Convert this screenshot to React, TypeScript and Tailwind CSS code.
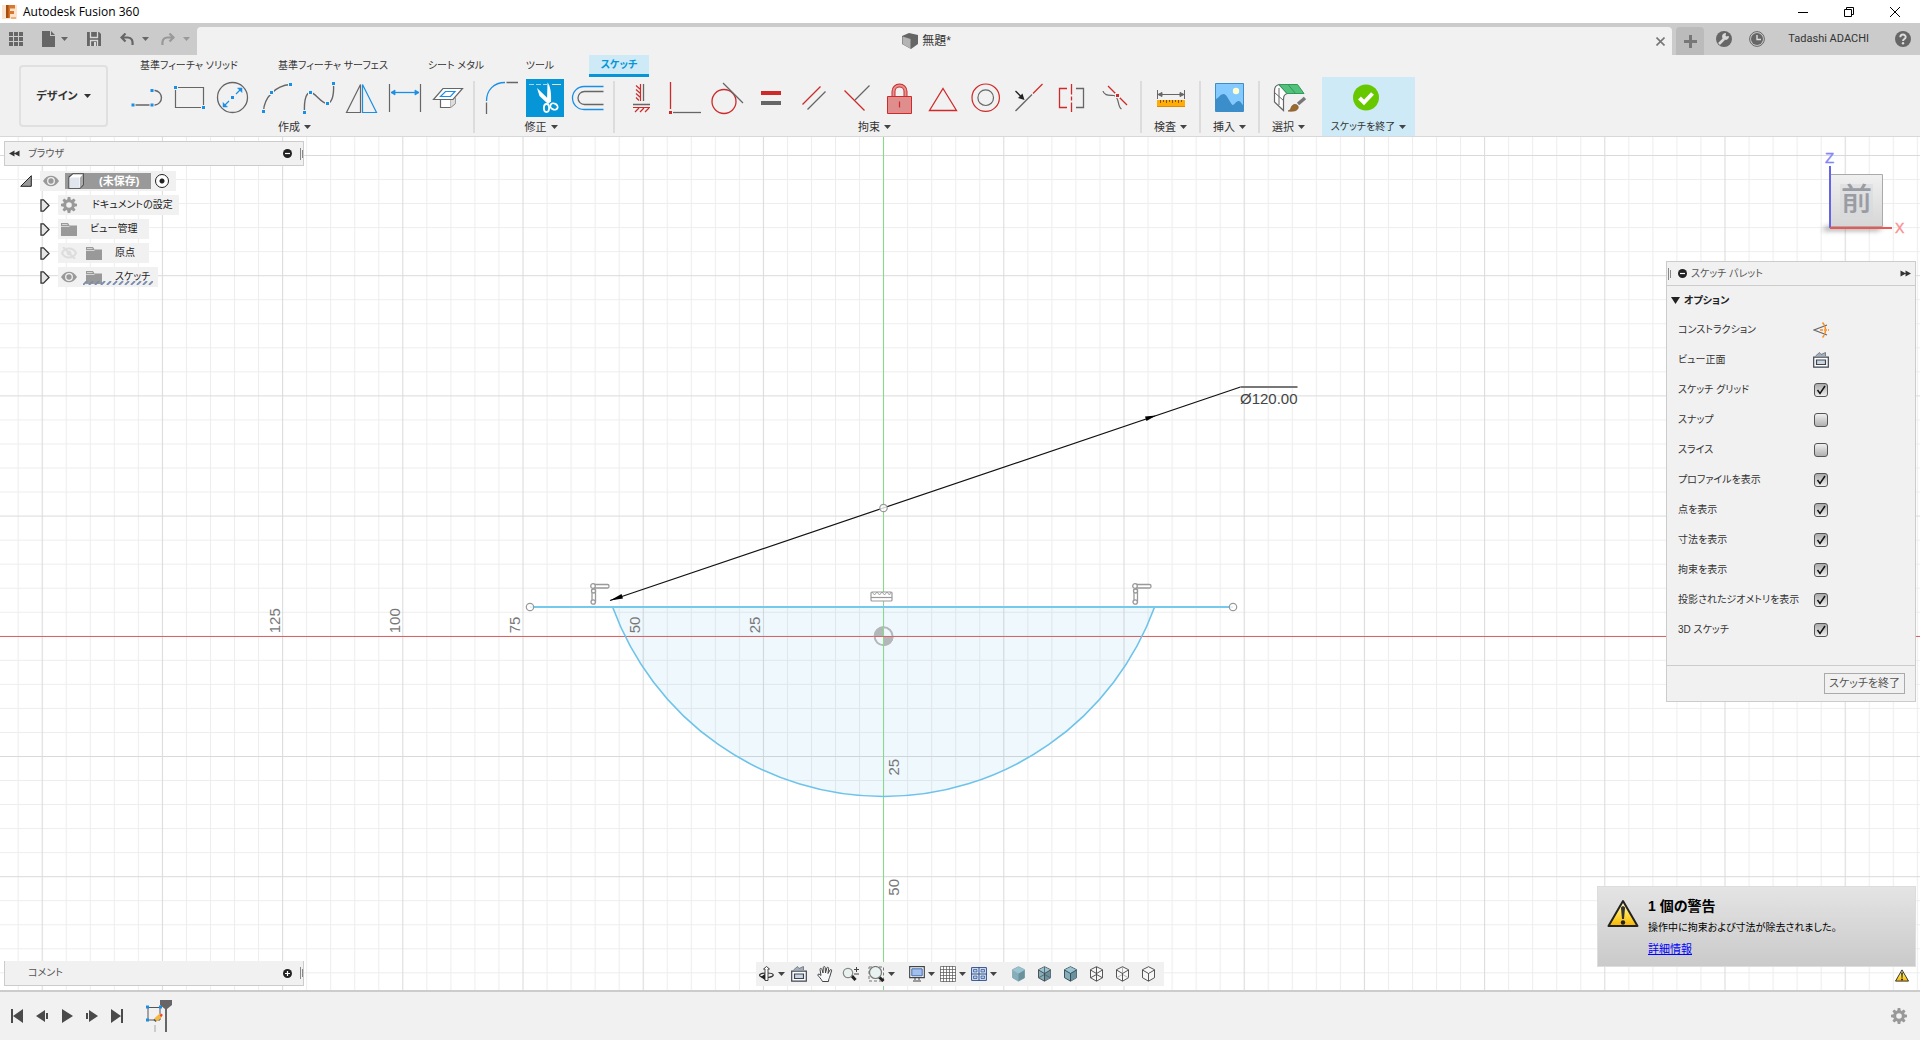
import React, { useState } from 'react';

const GRAY = '#666666';
const BLUE = '#1a8fe6';
const RED = '#cf2a2a';

type Pt = [number, number];

function Icon({ size = 38, children }: { size?: number; children: React.ReactNode }) {
  return (
    <svg width={size} height={size} viewBox={`0 0 ${size} ${size}`} fill="none" stroke={GRAY} className="block shrink-0" aria-hidden="true">
      {children}
    </svg>
  );
}

function Nodes({ at, color = BLUE }: { at: Pt[]; color?: string }) {
  return (
    <g stroke="#f1f1f1" strokeWidth="1" fill={color}>
      {at.map(([x, y]) => (
        <rect key={`${x}-${y}`} x={x - 2} y={y - 2} width="4" height="4" />
      ))}
    </g>
  );
}

function Caret({ className = 'text-[#444]' }: { className?: string }) {
  return (
    <svg width="7" height="4" viewBox="0 0 7 4" className={`block shrink-0 ${className}`} aria-hidden="true">
      <path d="M0 0h7L3.5 4z" fill="currentColor" />
    </svg>
  );
}

function Gear({ size = 16, color = '#999' }: { size?: number; color?: string }) {
  return (
    <svg width={size} height={size} viewBox="-8 -8 16 16" className="block shrink-0" aria-hidden="true">
      <circle r="4.3" fill="none" stroke={color} strokeWidth="3" />
      {[0, 45, 90, 135, 180, 225, 270, 315].map((a) => (
        <path key={a} d="M-1.8 -5h3.6l-.5 -3h-2.6z" fill={color} transform={`rotate(${a})`} />
      ))}
    </svg>
  );
}

const createTools: [string, React.ReactNode][] = [
  ['線分', <><path d="M4 26h22a7.3 7.3 0 0 0 0 -14.5h-3" strokeWidth="1.4" /><Nodes at={[[4, 26], [23, 26], [23, 11.5]]} /></>],
  ['長方形', <><path d="M3.5 8.5h28v20h-28z" strokeWidth="1.2" /><Nodes at={[[3.5, 8.5], [31.5, 28.5]]} /></>],
  ['円', <><circle cx="17.5" cy="18.5" r="15" strokeWidth="1.3" /><g stroke={BLUE} strokeWidth="1.2"><path d="M9.500 26.500L14 22M21 15l4.500 -4.500" /><path d="M8 23.500V28h4.500zM22.500 9H27v4.500z" fill={BLUE} strokeWidth=".5" /></g><Nodes at={[[17.5, 18.5]]} /></>],
  ['円弧', <><path d="M5.500 32.500C6 19 17 6.500 32.500 5.500" strokeWidth="1.4" /><Nodes at={[[5.5, 32.5], [13.5, 13.5], [32.5, 5.5]]} /></>],
  ['スプライン', <><path d="M3.500 33.500C3 22 5 14 9.500 13.500S20 25 26.500 24.500C32 23 33 14 32.500 4.500" strokeWidth="1.4" /><Nodes at={[[3.5, 33.5], [9.5, 13.5], [26.5, 24.5], [32.5, 4.5]]} /></>],
  ['ミラー', <><path d="M16.500 5.500v28h-14z" strokeWidth="1.2" /><path d="M18.500 5.500v28h14z" stroke={BLUE} strokeWidth="1.2" /></>],
  ['寸法', <><path d="M2.500 5v28M33.500 5v28" strokeWidth="1.2" /><path d="M4 13.500h28" stroke={BLUE} strokeWidth="1.3" /><path d="M4 13.500l4 -2.500v5zM32 13.500l-4 -2.500v5z" fill={BLUE} stroke={BLUE} strokeWidth=".8" /></>],
  ['プロジェクト', <><path d="M10.500 20.500v8h10l4.500 -4v-6" fill="#fff" strokeWidth="1.2" /><path d="M20.500 20.500v8l4.500 -4v-8z" fill="#ddd" stroke="none" /><path d="M20.500 21v7.500" strokeWidth="1" stroke="#bbb" /><path d="M13 9.500h19.500l-9.500 11H3.500z" fill="#fff" strokeWidth="1.2" /><path d="M15.500 12.500H25l-4.500 5H10.500z" stroke={BLUE} strokeWidth="1.2" /></>],
];

const modifyTools: [string, React.ReactNode][] = [
  ['フィレット', <><path d="M3.500 22C3.500 11 11 3.500 22 3.500" stroke={BLUE} strokeWidth="1.3" /><path d="M23.500 3.500H35M3.500 23.500V35" strokeWidth="1.3" /></>],
  ['トリム', <><path d="M3 5.500h18" stroke="#a5d8f2" strokeDasharray="5 2" /><path d="M26 5.500h9" stroke="#e9dcc8" /><path d="M21.500 3.500c2.500 3 4 9 3.500 19.500l-4 -1z" fill="#fff" stroke="none" /><path d="M11 9l2.500 8 8.500 8 3 -2.500z" fill="#fff" stroke="none" /><ellipse cx="20.500" cy="29" rx="2.600" ry="4" stroke="#fff" strokeWidth="1.800" /><ellipse cx="28" cy="27.500" rx="3.800" ry="3" stroke="#fff" strokeWidth="1.800" transform="rotate(28 28 27.500)" /></>],
  ['オフセット', <><path d="M34.500 7.500H15a11.500 11.500 0 0 0 0 23h19.500" stroke={BLUE} strokeWidth="1.3" /><path d="M34.500 12.500H15.500a6.500 6.500 0 0 0 0 13h19" strokeWidth="1.3" /></>],
];

const constraintTools: [string, React.ReactNode][] = [
  ['水平/垂直', <><path d="M17.500 5v17M13 6.500l4.500 4M13 10.500l4.500 4M13 14.500l4.500 4M13 18.500l3 3" stroke={RED} strokeWidth="1.2" /><path d="M20.500 5v17M10 25.500h17" strokeWidth="1.3" /><path d="M10 28.500h17M16 29l-4 4M21 29l-4 4M26 29l-4 4" stroke={RED} strokeWidth="1.2" /></>],
  ['直交', <><path d="M4.500 3v27" stroke={RED} strokeWidth="1.3" /><path d="M7 33.500h28" strokeWidth="1.3" /><Nodes at={[[4.5, 33.5]]} color={RED} /></>],
  ['正接', <><circle cx="15" cy="22.500" r="12" stroke={RED} strokeWidth="1.3" /><path d="M14 4l20 20" strokeWidth="1.3" /></>],
  ['等しい', <><path d="M9 12h20v4H9z" fill={RED} stroke="none" /><path d="M9 22h20v4H9z" fill={GRAY} stroke="none" /></>],
  ['平行', <><path d="M7.500 25.500l18 -18" stroke={RED} strokeWidth="1.3" /><path d="M12.500 30.500l18 -18" strokeWidth="1.3" /></>],
  ['垂直', <><path d="M6.500 11.500l20 20" stroke={RED} strokeWidth="1.3" /><path d="M17 21L31.500 6.500" strokeWidth="1.3" /></>],
  ['固定', <><path d="M12.500 17.500v-5a6 6 0 0 1 12 0v5" stroke={RED} strokeWidth="4" /><path d="M12.500 17.500v-5a6 6 0 0 1 12 0v5" stroke="#e39292" strokeWidth="2" /><path d="M6.500 17.500h24v17h-24z" fill="#df8d8d" stroke={RED} /><path d="M18.500 22.500v6" stroke={RED} strokeWidth="1.200" /></>],
  ['中点三角', <path d="M19 9.500l13.500 22h-27z" stroke={RED} strokeWidth="1.3" />],
  ['同心円', <><circle cx="18.700" cy="18.700" r="13.700" stroke={RED} strokeWidth="1.200" /><circle cx="18.700" cy="18.700" r="7.800" strokeWidth="1.200" /></>],
  ['共線', <><path d="M5.500 32L22 15.500" strokeWidth="1.3" /><path d="M23 14.500l9.500 -9.500" stroke={RED} strokeWidth="1.3" /><path d="M5.500 12l6 6" stroke="#222" strokeWidth="1.300" /><path d="M14.500 21l-6.500 -2 4.500 -4.500z" fill="#222" stroke="none" /></>],
  ['対称', <><path d="M14 9.500H6.500v19H14" stroke={RED} strokeWidth="1.3" /><path d="M18.500 5v10.500M18.500 17.500v4M18.500 23.500V33" stroke={RED} strokeWidth="1.3" /><path d="M23 9.500h7.500v19H23" strokeWidth="1.3" /></>],
  ['曲率', <><path d="M7 12c1 5 7 4 11 4.500c6 2 3 11.500 7.500 13.500" strokeWidth="1.2" /><path d="M12 7l19 19" stroke={RED} strokeWidth="1.3" /><Nodes at={[[21.5, 16.5]]} color={RED} /></>],
];

function Tool({ label, active, children }: { label: string; active?: boolean; children: React.ReactNode }) {
  return (
    <button type="button" aria-label={label} className={active ? 'bg-[#0696d7]' : ''}>
      <Icon>{children}</Icon>
    </button>
  );
}

function GroupLabel({ text, className = '' }: { text: string; className?: string }) {
  return (
    <button type="button" className={`mt-0.5 flex h-4 items-center justify-center gap-1 whitespace-nowrap ${className}`}>
      {text}
      <Caret />
    </button>
  );
}

function ToolGroup({ label, tools, active }: { label: string; tools: [string, React.ReactNode][]; active?: string }) {
  return (
    <section className="flex flex-col pt-0.5" aria-label={label}>
      <div className="flex gap-[5px]">
        {tools.map(([name, art]) => (
          <Tool key={name} label={name} active={name === active}>{art}</Tool>
        ))}
      </div>
      <GroupLabel text={label} className="pr-2" />
    </section>
  );
}

function SingleGroup({ label, children }: { label: string; children: React.ReactNode }) {
  return (
    <section className="flex w-[57px] flex-col items-center pt-0.5" aria-label={label}>
      <Tool label={label}>{children}</Tool>
      <GroupLabel text={label} />
    </section>
  );
}

const Divider = ({ className = '' }: { className?: string }) => <div className={`mt-1 h-[52px] w-0.5 shrink-0 bg-[#dcdcdc] ${className}`} />;

function TitleBar() {
  return (
    <div className="flex h-[23px] items-center bg-white text-black">
      <svg width="16" height="16" viewBox="0 0 16 16" className="ml-0.5" aria-hidden="true">
        <path d="M0 1h15v14H0z" fill="#fbe3cc" />
        <path d="M4 1h9v3.500H8V7h4v3H8v4H4z" fill="#d9782d" />
        <path d="M4 1h2.500v13H4z" fill="#a54f12" />
        <path d="M9 13h5v2H9z" fill="#f0b27a" />
      </svg>
      <h1 className="ml-[5px] font-['Open_Sans',sans-serif] text-[12px]">Autodesk Fusion 360</h1>
      <div className="ml-auto flex h-5 items-center pr-0.5">
        <button type="button" aria-label="最小化" className="grid w-[46px] place-items-center">
          <svg width="10" height="10"><path d="M0 5.500h10" stroke="#000" /></svg>
        </button>
        <button type="button" aria-label="元に戻す" className="grid w-[46px] place-items-center">
          <svg width="10" height="10" fill="none" stroke="#000"><path d="M.5 2.500h7v7h-7zM2.500 2.500v-2h7v7h-2" /></svg>
        </button>
        <button type="button" aria-label="閉じる" className="grid w-[46px] place-items-center">
          <svg width="10" height="10" stroke="#000"><path d="M0 0l10 10M10 0L0 10" /></svg>
        </button>
      </div>
    </div>
  );
}

function DocumentBar() {
  return (
    <div className="flex h-8 bg-[#cbcbcb] pt-1">
      <div className="flex w-[197px] shrink-0 items-center pb-1 pl-[9px] text-[#666]">
        <button type="button" aria-label="データパネル">
          <svg width="14" height="14" viewBox="0 0 14 14" fill="#666"><path d="M0 0h4v4H0zM5 0h4v4H5zM10 0h4v4h-4zM0 5h4v4H0zM5 5h4v4H5zM10 5h4v4h-4zM0 10h4v4H0zM5 10h4v4H5zM10 10h4v4h-4z" /></svg>
        </button>
        <button type="button" aria-label="ファイル" className="ml-[19px] flex items-center gap-1.5">
          <svg width="13" height="16" viewBox="0 0 13 16" fill="#666"><path d="M0 0h8v5h5v11H0zM9 0l4 4H9z" /></svg>
          <Caret className="text-[#666]" />
        </button>
        <button type="button" aria-label="保存" className="ml-[19px]">
          <svg width="14" height="14" viewBox="0 0 14 14"><path d="M0 0h12l2 2v12H0z" fill="#666" /><path d="M3.500 0v5.500h7V0M3.500 14V8.500h7V14" fill="none" stroke="#d8d8d8" strokeWidth="1.300" /><path d="M7 10h2v4H7z" fill="#d8d8d8" /></svg>
        </button>
        <button type="button" aria-label="元に戻す" className="ml-[19px] flex items-center gap-2">
          <svg width="14" height="13" viewBox="0 0 14 13" fill="none" stroke="#666" strokeWidth="2.200"><path d="M5.500 0.500L1.500 4.500l4 4M2 4.500h6c3.500 0 5 3 4.500 7.500" /></svg>
          <Caret className="text-[#666]" />
        </button>
        <button type="button" aria-label="やり直し" className="ml-3 flex items-center gap-2">
          <svg width="14" height="13" viewBox="0 0 14 13" fill="none" stroke="#999" strokeWidth="2.200"><path d="M8.500 0.500l4 4l-4 4M12 4.500H6C2.500 4.500 1 7.500 1.500 12" /></svg>
          <Caret className="text-[#999]" />
        </button>
      </div>
      <div className="flex min-w-0 flex-1 items-center rounded-t bg-[#f1f1f1]">
        <div className="flex flex-1 items-center justify-center gap-1 text-[12px] text-[#333]">
          <svg width="16" height="16" viewBox="0 0 16 16" aria-hidden="true"><path d="M0 3l7 -3 9 2v9l-7 5 -9 -5z" fill="#666" /><path d="M0.500 3.500l8 2.500v9.500l-8 -4.500z" fill="#b4b4b4" /></svg>
          無題*
        </div>
        <button type="button" aria-label="タブを閉じる" className="w-4">
          <svg width="9" height="9" stroke="#777" strokeWidth="1.600"><path d="M.5 .5l8 8M8.500 .5l-8 8" /></svg>
        </button>
      </div>
      <button type="button" aria-label="新しいデザイン" className="ml-1 grid w-7 shrink-0 place-items-center rounded-t bg-[#bbb]">
        <svg width="13" height="13"><path d="M6.500 0v13M0 6.500h13" stroke="#777" strokeWidth="3" /></svg>
      </button>
      <div className="flex shrink-0 items-center pb-1 pl-3 pr-[9px]">
        <button type="button" aria-label="拡張機能">
          <svg width="16" height="16" viewBox="0 0 16 16"><circle cx="8" cy="8" r="8" fill="#666" /><path d="M3 13l5 -5" stroke="#d8d8d8" strokeWidth="2.600" /><path d="M12.500 5.500a3 3 0 1 1 -3 -3l-.5 2.500 1 1z" fill="#d8d8d8" stroke="#d8d8d8" strokeWidth="1" /></svg>
        </button>
        <button type="button" aria-label="ジョブの状態" className="ml-[17px]">
          <svg width="16" height="16" viewBox="0 0 16 16" fill="none"><circle cx="8" cy="8" r="7.400" stroke="#666" /><circle cx="8" cy="8" r="6" fill="#666" /><path d="M8 4v4.500h4" stroke="#ddd" strokeWidth="1.400" /></svg>
        </button>
        <button type="button" className="ml-[23px] whitespace-nowrap font-['Roboto',sans-serif] text-[11px] text-[#333]">Tadashi ADACHI</button>
        <button type="button" aria-label="ヘルプ" className="ml-[26px]">
          <svg width="16" height="16" viewBox="0 0 16 16" fill="none"><circle cx="8" cy="8" r="8" fill="#666" /><path d="M5.300 6.300C5.300 2.600 10.700 2.800 10.700 6C10.700 8 8 8 8 10" stroke="#ddd" strokeWidth="1.900" /><circle cx="8" cy="12.300" r="1.200" fill="#ddd" /></svg>
        </button>
      </div>
    </div>
  );
}

function Ribbon() {
  return (
    <div className="flex h-[82px] border-b border-[#d8d8d8] bg-[#f1f1f1] text-[11px] text-[#333]">
      <button type="button" className="ml-[19px] mt-2.5 flex h-[62px] w-[89px] shrink-0 items-center justify-center gap-1.5 rounded border-2 border-[#e0e0e0] font-bold">
        デザイン
        <Caret className="text-[#333]" />
      </button>
      <div className="min-w-0 flex-1">
        <div role="tablist" className="ml-[11px] flex h-[22px] whitespace-nowrap text-[10px]">
          <button type="button" role="tab" className="w-[140px]">基準フィーチャ ソリッド</button>
          <button type="button" role="tab" className="w-[148px]">基準フィーチャ サーフェス</button>
          <button type="button" role="tab" className="w-[98px]">シート メタル</button>
          <button type="button" role="tab" className="w-[70px]">ツール</button>
          <button type="button" role="tab" aria-selected="true" className="ml-3.5 w-[60px] border-b-[3px] border-[#0696d7] bg-[#cdeaf6] font-bold text-[#0696d7]">スケッチ</button>
        </div>
        <div className="ml-[21px] flex">
          <ToolGroup label="作成" tools={createTools} />
          <Divider className="ml-[5px] mr-2" />
          <ToolGroup label="修正" tools={modifyTools} active="トリム" />
          <Divider className="ml-1.5 mr-2" />
          <ToolGroup label="拘束" tools={constraintTools} />
          <Divider className="ml-1.5" />
          <SingleGroup label="検査">
            <path d="M5.500 11v9M32.500 11v9M7 15.500h24" />
            <path d="M6 15.500l4 -2v4zM32 15.500l-4 -2v4z" fill={GRAY} />
            <path d="M5 21h28v7H5z" fill="#ffab0a" stroke="none" />
            <path d="M5 27.500h28" stroke="#e08a00" />
            <path d="M8.500 21v3M11.500 21v2M14.500 21v3M17.500 21v2M20.500 21v3M23.500 21v2M26.500 21v3M29.500 21v2" stroke="#7a5a10" />
          </SingleGroup>
          <Divider />
          <SingleGroup label="挿入">
            <path d="M4.500 4.500h28v28h-28z" fill="#84caff" stroke="#3c8ecb" />
            <path d="M5 20c3 -1 4 -5 7.500 -5s6 8 9 11c2 0 3.500 -4 6 -4s3 3 4.500 4v6H5z" fill="#3c8ecb" stroke="none" />
            <circle cx="25" cy="12" r="3.200" fill="#ffffcf" stroke="none" />
          </SingleGroup>
          <Divider />
          <SingleGroup label="選択">
            <path d="M9 5.500c-4 1 -4.500 4 -4.500 6v11.500l9 8.500V20c0 -3 1 -5 4 -5.500z" fill="#fff" strokeWidth="1.200" />
            <path d="M4.500 13.500l9 8M9 9v17" strokeWidth="1" />
            <path d="M9 5.500h18.500l6.500 9H17z" fill="#53c07c" stroke="#2f9a5a" />
            <path d="M18 5.500l7.500 9" stroke="#2f9a5a" />
            <path d="M35 19l-7 6" stroke="#777" strokeWidth="3.500" />
            <path d="M18 32c4 -1 2 -5 6 -6.500c3 -.5 5 1.500 4 4c-1.500 3 -6 3 -10 2.500z" fill="#9b6a2f" stroke="#6f4a1e" strokeWidth=".6" />
          </SingleGroup>
          <section className="ml-[5px] flex h-[59px] w-[93px] flex-col items-center bg-[#cdeaf6] pt-0.5" aria-label="スケッチを終了">
            <div className="flex pr-1.5">
              <Tool label="スケッチを終了 (チェック)">
                <circle cx="19" cy="18.500" r="13" fill="#67c800" stroke="none" />
                <path d="M12.500 19l4.500 4.500 8.500 -9" stroke="#fff" strokeWidth="4" />
              </Tool>
            </div>
            <GroupLabel text="スケッチを終了" className="text-[10px]" />
          </section>
        </div>
      </div>
    </div>
  );
}

const GRID = 120.2;
const OX = 883.6;
const OY = 499.3;

function LGlyph({ x, y }: { x: number; y: number }) {
  return (
    <g transform={`translate(${x} ${y})`} fill="#fff" stroke="#999" strokeWidth="1.300">
      <rect x="2" y="1.500" width="17" height="3.500" rx="1.500" />
      <path d="M2 7h3.500v12H2z" />
      <circle cx="3" cy="3" r="2.300" />
      <circle cx="3.500" cy="8" r="2" />
      <circle cx="3.200" cy="19" r="2.200" />
    </g>
  );
}

function Sketch() {
  return (
    <svg width="100%" height="100%" className="absolute inset-0 font-['Liberation_Sans',sans-serif]" role="img" aria-label="スケッチ平面">
      <defs>
        <pattern id="minor" x={OX - 0.5} y={OY - 0.5} width={GRID / 5} height={GRID / 5} patternUnits="userSpaceOnUse">
          <path d={`M.5 0V${GRID}M0 .5H${GRID}`} stroke="#000" strokeOpacity=".07" fill="none" />
        </pattern>
        <pattern id="major" x={OX - 0.5} y={OY - 0.5} width={GRID} height={GRID} patternUnits="userSpaceOnUse">
          <path d={`M.5 0V${GRID}M0 .5H${GRID}`} stroke="#000" strokeOpacity=".08" fill="none" />
        </pattern>
      </defs>
      <path d="M612.600 470A288.500 288.500 0 0 0 1154.600 470z" fill="#eff8fd" />
      <rect width="100%" height="100%" fill="url(#minor)" />
      <rect width="100%" height="100%" fill="url(#major)" />
      <path d="M883.500 0V2000" stroke="#86dc86" />
      <path d="M0 499.500H8000" stroke="#d96464" />
      <g transform={`translate(${OX} ${OY})`}>
        <path d="M-10 0a10 10 0 0 1 10 -10v10zM10 0a10 10 0 0 1 -10 10V0z" fill="#b3b7ba" />
        <circle r="9" fill="none" stroke="#b3b7ba" strokeWidth="2" />
      </g>
      <path d="M883.500 489v20" stroke="#86dc86" />
      <path d="M874 499.500h20" stroke="#d96464" />
      <path d="M612.600 470A288.500 288.500 0 0 0 1154.600 470" fill="none" stroke="#6ec3ea" strokeWidth="1.600" />
      <path d="M530 470H1233" stroke="#75c8ee" strokeWidth="2" />
      <path d="M610 463.500L1240.500 250" stroke="#111" strokeWidth="1.200" />
      <path d="M1240.500 250h57" stroke="#777" strokeWidth="2" />
      <path d="M610 463.500l11.500 -6.500 1.500 4.500zM1156 278.500l-11 1 1.500 4.500z" fill="#000" />
      <g fill="#fff" fillOpacity=".8" stroke="#999" strokeWidth="1.200">
        <circle cx="530" cy="470" r="3.700" />
        <circle cx="1233" cy="470" r="3.700" />
        <circle cx="883.500" cy="371" r="3.700" />
      </g>
      <LGlyph x={590} y={446} />
      <LGlyph x={1132} y={446} />
      <g fill="#fff" stroke="#999" strokeWidth="1.200">
        <rect x="871" y="455" width="21" height="9" rx="1" />
        <path d="M871 460.500h21" />
        <path d="M872 455l2.500 3 2.500 -3 2.500 3 2.500 -3 2.500 3 2.500 -3 2.500 3 1.500 -3" fill="none" strokeWidth=".9" />
      </g>
      <text x="1240" y="267" fontSize="15" fill="#444">Ø120.00</text>
      <g fontSize="15" fill="#777">
        {[125, 100, 75, 50, 25].map((n) => (
          <text key={n} transform={`translate(${OX - n * (GRID / 25) - 3} ${OY - 3}) rotate(-90)`}>{n}</text>
        ))}
        {[25, 50].map((n) => (
          <text key={n} transform={`translate(${OX + 15} ${OY + n * (GRID / 25) + 19}) rotate(-90)`}>{n}</text>
        ))}
      </g>
    </svg>
  );
}

const Eye = () => (
  <svg width="16" height="12" viewBox="0 0 16 12" className="block shrink-0" aria-hidden="true">
    <path d="M0 6C4 -1 12 -1 16 6C12 13 4 13 0 6z" fill="#999" />
    <circle cx="8" cy="6" r="3.300" fill="#999" stroke="#f1f1f1" strokeWidth="1.300" />
  </svg>
);

const EyeOff = () => (
  <svg width="16" height="12" viewBox="0 0 16 12" className="block shrink-0" fill="none" stroke="#ddd" aria-hidden="true">
    <path d="M1 6C4 0 12 0 15 6C12 12 4 12 1 6z" strokeWidth="2" />
    <path d="M2 0l12 12" strokeWidth="2" />
    <circle cx="8" cy="6" r="2" fill="#ddd" />
  </svg>
);

const Folder = () => (
  <svg width="16" height="13" viewBox="0 0 16 13" className="block shrink-0" aria-hidden="true">
    <path d="M0 0h7l1.500 2.500H16V13H0z" fill="#999" />
    <path d="M1 1.500h5.500M0 3.500h8.500" stroke="#d5d5d5" />
  </svg>
);

const Expander = () => (
  <svg width="10" height="13" viewBox="0 0 10 13" className="block shrink-0" aria-hidden="true">
    <path d="M1 .8h2.500L9 6.500L3.500 12.200H1z" fill="#e6e6e6" stroke="#333" strokeWidth="1.300" />
  </svg>
);

const Grip = () => (
  <svg width="3" height="12" className="block shrink-0" aria-hidden="true"><path d="M.5 0v12M2.500 2v8" stroke="#888" /></svg>
);

function RoundSign({ plus }: { plus?: boolean }) {
  return (
    <svg width="9" height="9" viewBox="0 0 9 9" className="block shrink-0" aria-hidden="true">
      <circle cx="4.500" cy="4.500" r="4.500" fill="#222" />
      <path d={plus ? 'M2 4.500h5M4.500 2v5' : 'M2 4.500h5'} stroke="#fff" strokeWidth="1.200" />
    </svg>
  );
}

function TreeRow({ children, className = '' }: { children: React.ReactNode; className?: string }) {
  return (
    <li className="flex h-5 items-center">
      <button type="button" aria-label="展開" className="ml-9"><Expander /></button>
      <div className={`ml-2 flex h-5 items-center bg-[#f1f1f1] pl-[3px] ${className}`}>{children}</div>
    </li>
  );
}

function Browser() {
  return (
    <div className="relative flex w-[300px] flex-col text-[10px]">
      <div className="flex h-[25px] items-center border border-[#ccc] bg-[#f1f1f1] pl-1 text-[#555]">
        <button type="button" aria-label="折りたたむ">
          <svg width="11" height="7"><path d="M5.500 .5v6L0 3.500zM10.500 .5v6L5 3.500z" fill="#333" /></svg>
        </button>
        <h2 className="ml-2">ブラウザ</h2>
        <button type="button" aria-label="最小化" className="ml-auto mr-2"><RoundSign /></button>
        <Grip />
      </div>
      <ul className="mt-[5px] flex flex-col gap-1 whitespace-nowrap text-[#222]">
        <li className="flex h-5 items-center">
          <svg width="12" height="12" viewBox="0 0 12 12" className="ml-4 mr-2" aria-hidden="true"><path d="M11.300 .7v10.600H.7z" fill="#999" stroke="#222" /></svg>
          <div className="flex h-5 w-[136px] items-center bg-[#f1f1f1] pl-[3px]">
            <Eye />
            <div className="ml-1.5 flex h-4 w-[86px] items-center bg-[#999] pl-[3px] text-[11px] font-bold text-white">
              <svg width="16" height="16" viewBox="0 0 16 16" className="mr-[15px] shrink-0" aria-hidden="true">
                <path d="M1 4l4 -3.300h10.300v11L12 15.300H1z" fill="#fff" stroke="#444" strokeWidth="1.100" />
                <path d="M1.500 4.500h10V15h-10z" fill="#e1e5ee" />
                <path d="M12 4.500l3 -3v10l-3 3.500z" fill="#aaa" />
              </svg>
              (未保存)
            </div>
            <input type="radio" defaultChecked aria-label="アクティブ コンポーネント" className="ml-1 size-3.5 appearance-none rounded-full border-[1.5px] border-[#222] bg-[radial-gradient(circle,#222_0_2px,#fff_3px)]" />
          </div>
        </li>
        <TreeRow className="min-w-[118px] pr-1.5"><Gear /><span className="ml-[15px]">ドキュメントの設定</span></TreeRow>
        <TreeRow className="min-w-[90px] pr-3"><Folder /><span className="ml-[13px]">ビュー管理</span></TreeRow>
        <TreeRow className="min-w-[91px] pr-3"><EyeOff /><span className="ml-[9px]"><Folder /></span><span className="ml-[13px]">原点</span></TreeRow>
        <TreeRow className="relative min-w-[99px] pr-2">
          <Eye /><span className="ml-[9px]"><Folder /></span><span className="ml-[13px]">スケッチ</span>
          <svg width="70" height="4" className="absolute bottom-0.5 left-[25px]" aria-hidden="true">
            <path d="M0 4l4 -4M6 4l4 -4M12 4l4 -4M18 4l4 -4M24 4l4 -4M30 4l4 -4M36 4l4 -4M42 4l4 -4M48 4l4 -4M54 4l4 -4M60 4l4 -4M66 4l4 -4" stroke="#7a8cae" strokeWidth="1.800" />
          </svg>
        </TreeRow>
      </ul>
      <div className="mt-auto mb-1 flex h-[25px] items-center border border-t-0 border-[#ccc] bg-[#f1f1f1] pl-[23px] text-[#555]">
        <h2>コメント</h2>
        <button type="button" aria-label="コメントを追加" className="ml-auto mr-2"><RoundSign plus /></button>
        <Grip />
      </div>
    </div>
  );
}

function ViewCube() {
  return (
    <svg width="110" height="100" viewBox="0 0 110 100" className="block shrink-0 font-['Liberation_Sans','Noto_Sans_CJK_JP',sans-serif]" role="img" aria-label="ビューキューブ">
      <defs>
        <linearGradient id="face" x1="0" y1="0" x2="0" y2="1"><stop offset="0" stopColor="#f0f0f0" /><stop offset="1" stopColor="#d6d6d6" /></linearGradient>
        <filter id="soft" x="-20%" width="140%" y="-200%" height="500%"><feGaussianBlur stdDeviation="2.500" /></filter>
      </defs>
      <path d="M16 81h58l-6 5H12z" fill="#777" opacity=".6" filter="url(#soft)" />
      <path d="M20.500 29.500h52v52h-52z" fill="url(#face)" stroke="#aaa" />
      <path d="M30 39h33v33H30z" fill="#d5d7dc" opacity=".5" />
      <text x="46.500" y="65" textAnchor="middle" fontSize="31" fontWeight="500" fill="#9a9ca3">前</text>
      <path d="M20 21v62" stroke="#6464e6" strokeWidth="2" />
      <path d="M20 83h62" stroke="#ee5555" strokeWidth="2" />
      <text x="15" y="18" fontSize="15" fill="#8585fa" stroke="#8585fa" strokeWidth=".4">Z</text>
      <text x="85" y="88" fontSize="14" fill="#fa8f8f" stroke="#fa8f8f" strokeWidth=".4">X</text>
    </svg>
  );
}

const options: [string, boolean][] = [
  ['スケッチ グリッド', true],
  ['スナップ', false],
  ['スライス', false],
  ['プロファイルを表示', true],
  ['点を表示', true],
  ['寸法を表示', true],
  ['拘束を表示', true],
  ['投影されたジオメトリを表示', true],
  ['3D スケッチ', true],
];

function Option({ label, initial }: { label: string; initial: boolean }) {
  const [on, setOn] = useState(initial);
  return (
    <label className="flex h-[30px] items-center">
      <span className="w-[136px] whitespace-nowrap">{label}</span>
      <span className="grid size-3.5 place-items-center">
        <input
          type="checkbox"
          checked={on}
          onChange={() => setOn(!on)}
          className="col-start-1 row-start-1 size-3.5 appearance-none rounded-[3px] border-[1.5px] border-[#555] bg-linear-to-b from-[#f0f0f0] to-[#b0b0b0] checked:from-[#aaa] checked:to-[#eee]"
        />
        {on && (
          <svg width="10" height="10" className="pointer-events-none col-start-1 row-start-1" aria-hidden="true">
            <path d="M1.500 5l2.500 3.500L9 1" fill="none" stroke="#111" strokeWidth="1.500" />
          </svg>
        )}
      </span>
    </label>
  );
}

const LookAt = () => (
  <svg width="16" height="16" viewBox="0 0 16 16" className="block" fill="none" aria-hidden="true">
    <path d="M2.500 4l4 -3.500 1.500 2 4.500 -2V4" fill="#9fb0c4" stroke="#777" strokeWidth=".9" />
    <path d="M.7 5.200h14.600v10H.7z" fill="#fff" stroke="#3e4450" strokeWidth="1.200" />
    <path d="M3.500 8h9v4.500h-9z" fill="#ccd6e2" stroke="#3e4450" strokeWidth="1.200" />
  </svg>
);

function Palette() {
  return (
    <section aria-label="スケッチ パレット" className="mr-1 w-[250px] border border-[#ccc] bg-[#f1f1f1] text-[10px] text-[#333]">
      <header className="flex h-6 items-center border-b border-[#ccc] pl-px text-[#555]">
        <Grip />
        <button type="button" aria-label="最小化" className="ml-[7px]"><RoundSign /></button>
        <h2 className="ml-1">スケッチ パレット</h2>
        <button type="button" aria-label="展開" className="ml-auto mr-1">
          <svg width="11" height="7"><path d="M.5 .5v6L6 3.500zM5.500 .5v6L11 3.500z" fill="#333" /></svg>
        </button>
      </header>
      <h3 className="flex h-[29px] items-center gap-1 pl-1 font-bold text-[#222]">
        <svg width="9" height="7" aria-hidden="true"><path d="M0 0h9L4.500 7z" fill="#222" /></svg>
        オプション
      </h3>
      <div className="pl-[11px]">
        <div className="flex h-[30px] items-center">
          <span className="w-[135px]">コンストラクション</span>
          <button type="button" aria-label="コンストラクション">
            <svg width="16" height="16" viewBox="0 0 16 16" fill="none" aria-hidden="true">
              <path d="M14 3L1 8l13 5" stroke="#666" strokeWidth="1.200" />
              <path d="M7 8h9" stroke="#ff8c1a" strokeWidth="1.500" strokeDasharray="3 1" />
              <path d="M9.500 .5c4 4.500 4 10.500 0 15" stroke="#ff8c1a" strokeWidth="1.500" strokeDasharray="3 1.500" />
            </svg>
          </button>
        </div>
        <div className="flex h-[30px] items-center">
          <span className="w-[135px]">ビュー正面</span>
          <button type="button" aria-label="ビュー正面"><LookAt /></button>
        </div>
        {options.map(([label, on]) => (
          <Option key={label} label={label} initial={on} />
        ))}
      </div>
      <footer className="mt-5 flex h-9 items-center justify-end border-t border-[#ccc] pr-2.5">
        <button type="button" className="h-[21px] whitespace-nowrap border border-[#aaa] px-1 text-[11px] leading-[19px] text-[#555]">スケッチを終了</button>
      </footer>
    </section>
  );
}

function Warning({ size }: { size: number }) {
  return (
    <svg width={size} height={size - 3} viewBox="0 0 32 29" className="block shrink-0" aria-hidden="true">
      <defs><linearGradient id={`warn${size}`} x1="0" y1="0" x2="0" y2="1"><stop offset="0" stopColor="#fffbe0" /><stop offset=".5" stopColor="#ffe14d" /><stop offset="1" stopColor="#f7b500" /></linearGradient></defs>
      <path d="M16 2L30.500 27H1.500z" fill={`url(#warn${size})`} stroke="#222" strokeWidth="2" strokeLinejoin="round" />
      <path d="M14 9c0 -2.500 4 -2.500 4 0l-1 11h-2z" fill="#333" />
      <circle cx="16" cy="23.500" r="2.200" fill="#222" />
    </svg>
  );
}

function Notice() {
  return (
    <aside className="mr-1 flex w-[319px] border border-[#ddd] bg-linear-to-b from-[#e4e4e4] to-[#cacaca] text-black">
      <div className="px-[9px] pt-3"><Warning size={32} /></div>
      <div className="h-[79px] whitespace-nowrap pt-2 text-[10px]">
        <h2 className="text-[14px] font-bold leading-[22px]">1 個の警告</h2>
        <p className="leading-[22px]">操作中に拘束および寸法が除去されました。</p>
        <a href="#details" className="text-[11px] leading-[20px] text-[#00f] underline">詳細情報</a>
      </div>
    </aside>
  );
}

const HEX = 'M6.500 .7l6 3v8l-6 3.500 -6 -3.500v-8z';

function Cube({ fill, hidden, faces, edge = '#444' }: { fill?: boolean; hidden?: string; faces?: boolean; edge?: string }) {
  return (
    <svg width="13" height="16" viewBox="0 0 13 16" className="block" fill="none" strokeWidth=".9" aria-hidden="true">
      <path d={HEX} fill={fill ? '#86adba' : '#f7f7f7'} stroke={edge} />
      {fill && <path d="M6.500 7.500l6 -3.500v8l-6 3z" fill="#6b909e" />}
      {fill && <path d="M6.500 7.500l-6 -3.500 6 -3 6 3z" fill="#9cc4d0" />}
      {hidden && <path d="M6.500 1v7.500l6 3.300M6.500 8.500l-6 3.300" stroke={hidden} />}
      {faces && <path d="M.5 4l6 3.500 6 -3.500M6.500 7.500V15" stroke={edge} />}
    </svg>
  );
}

function NavButton({ label, menu, className = '', children }: { label: string; menu?: boolean; className?: string; children: React.ReactNode }) {
  return (
    <button type="button" aria-label={label} className={`flex items-center gap-[3px] ${className}`}>
      {children}
      {menu && <Caret />}
    </button>
  );
}

function NavBar() {
  return (
    <div className="flex h-6 items-center bg-[#f1f1f1] pl-0.5 pr-[9px]">
      <NavButton label="オービット" menu>
        <svg width="17" height="16" viewBox="0 0 17 16" fill="none" stroke="#333" strokeWidth="1.200">
          <path d="M5 11c-5 -.5 -5 -4 3.500 -4s9 3.500 1.500 4.500" />
          <path d="M7 14.500V3H5.500L8.500 .5 11.500 3H10v11.500z" fill="#fff" strokeWidth=".9" />
          <path d="M7 8v6L2.500 11z" fill="#222" stroke="none" />
        </svg>
      </NavButton>
      <NavButton label="ビュー正面" className="ml-1.5"><LookAt /></NavButton>
      <NavButton label="画面移動" className="ml-2.5">
        <svg width="16" height="16" viewBox="0 0 16 16" fill="#f7f8fa" stroke="#444" strokeWidth="1"><path d="M5.500 15.500C4 12.500 2 11 .7 9c.3 -1.500 2 -1 3.300 .5L3 3.500c0 -1.500 1.500 -1.500 2 0l1 3.500 .3 -5.500c.2 -1.300 1.700 -1.300 1.900 0L8.500 7l1.300 -5c.5 -1.300 2 -.8 1.800 .5L11 7.500l2 -3.500c.8 -1 2 -.3 1.500 1L13 10c-.5 2 -1.500 3 -1.500 5.500z" /></svg>
      </NavButton>
      <NavButton label="ズーム" className="ml-[9px]">
        <svg width="17" height="16" viewBox="0 0 17 16" fill="none" stroke="#444"><path d="M9 9l4.500 5" stroke="#222" strokeWidth="3" /><circle cx="6" cy="7" r="4.700" fill="#e8f2f0" strokeWidth="1.200" stroke="#888" /><path d="M12 3.500h5M14.500 1v5M12 8h5" /></svg>
      </NavButton>
      <NavButton label="フィット" menu className="ml-[9px]">
        <svg width="17" height="16" viewBox="0 0 17 16" fill="none" stroke="#444"><path d="M1 1h14.500v14H1z" strokeDasharray="3 2" stroke="#777" /><path d="M11 11l4.500 4" stroke="#222" strokeWidth="3" /><circle cx="7.500" cy="6.500" r="6" fill="#e8f2f0" strokeWidth="1.200" stroke="#777" /></svg>
      </NavButton>
      <NavButton label="表示設定" menu className="ml-3.5">
        <svg width="16" height="16" viewBox="0 0 16 16" fill="none" stroke="#444"><path d="M.7 .7h14.600v11H.7z" fill="#fff" strokeWidth="1.200" /><path d="M2.800 2.800h10.400v7H2.800z" fill="#a4c0ea" stroke="#3d6cb4" /><path d="M6 12v2M10 12v2M4 15h8" /></svg>
      </NavButton>
      <NavButton label="グリッドとスナップ" menu className="ml-[5px]">
        <svg width="16" height="16" viewBox="0 0 16 16" fill="#fff" stroke="#555"><path d="M.5 .5h15v15H.5zM3.500 0v16M6.500 0v16M9.500 0v16M12.500 0v16M0 3.500h16M0 6.500h16M0 9.500h16M0 12.500h16" strokeWidth=".7" /></svg>
      </NavButton>
      <NavButton label="ビューポート" menu className="ml-[5px]">
        <svg width="16" height="14" viewBox="0 0 16 14" fill="#b7cbea" stroke="#2d4f8c"><path d="M.6 .6h14.800v12.800H.6z" fill="#dfe8f5" /><path d="M2.500 2.500h3.500v2.500h-3.500zM10 2.500h3.500v2.500h-3.500zM2.500 9h3.500v2.500h-3.500zM10 9h3.500v2.500h-3.500z" strokeWidth=".7" /><path d="M8 0v14M0 7h16" /></svg>
      </NavButton>
      <div className="ml-[15px] flex gap-[13px]">
        <button type="button" aria-label="シェーディング"><Cube fill edge="#86adba" /></button>
        <button type="button" aria-label="シェーディング、隠線"><Cube fill hidden="#4a6570" faces /></button>
        <button type="button" aria-label="シェーディング、可視エッジ"><Cube fill faces edge="#2d4650" /></button>
        <button type="button" aria-label="ワイヤフレーム"><Cube hidden="#444" faces /></button>
        <button type="button" aria-label="ワイヤフレーム、隠線"><Cube hidden="#aaa" faces /></button>
        <button type="button" aria-label="ワイヤフレーム、可視エッジ"><Cube faces /></button>
      </div>
    </div>
  );
}

function Timeline() {
  const controls: [string, string][] = [
    ['先頭へ', 'M0 0h2v14H0zM12 0v14L2 7z'],
    ['前へ', 'M9 1v12L0 7zM10 4h2v6h-2z'],
    ['再生', 'M1 0v14L12 7z'],
    ['次へ', 'M0 4h2v6H0zM3 1v12L12 7z'],
    ['末尾へ', 'M10 0h2v14h-2zM0 0v14l10 -7z'],
  ];
  return (
    <footer className="flex h-[50px] shrink-0 items-center border-t-2 border-[#ccc] bg-[#f1f1f1] pl-[11px] pr-[13px]">
      <div className="flex gap-[13px]">
        {controls.map(([label, d]) => (
          <button key={label} type="button" aria-label={label}>
            <svg width="12" height="14" viewBox="0 0 12 14" className="block"><path d={d} fill="#4a4a4a" /></svg>
          </button>
        ))}
      </div>
      <button type="button" aria-label="スケッチ フィーチャ" className="ml-[23px]">
        <svg width="28" height="34" viewBox="0 0 28 34" fill="none" className="block">
          <path d="M2 8.500h12v12.500H2z" stroke="#555" />
          <path d="M0 6.500h3v3H0zM13 6.500h3v3h-3zM0 19.500h3v3H0z" fill="#1a8fe6" />
          <path d="M9.500 21l5.500 -5" stroke="#f5b942" strokeWidth="4" />
          <path d="M14.500 15.500l1.500 1.500" stroke="#f04040" strokeWidth="2.500" />
          <path d="M8 20.500l2 2" stroke="#555" strokeWidth="1.500" />
          <path d="M8 26h2v7H8z" fill="#ccc" />
          <path d="M14 1h12v5l-5 4h-2l-5 -4z" fill="#666" />
          <path d="M19 8h2v25h-2z" fill="#666" />
        </svg>
      </button>
      <button type="button" aria-label="設定" className="ml-auto"><Gear /></button>
    </footer>
  );
}

export default function App() {
  return (
    <div className="flex h-screen flex-col overflow-hidden bg-white font-['Liberation_Sans','Noto_Sans_CJK_JP',sans-serif] text-[11px] leading-4 [font-feature-settings:'palt']">
      <header className="shrink-0">
        <TitleBar />
        <DocumentBar />
        <Ribbon />
      </header>
      <main className="relative flex min-h-0 flex-1 justify-between overflow-hidden pl-1 pt-1">
        <Sketch />
        <Browser />
        <div className="absolute inset-x-0 bottom-1 flex justify-center">
          <NavBar />
        </div>
        <div className="relative flex flex-col items-end">
          <div className="pt-1"><ViewCube /></div>
          <div className="mt-4"><Palette /></div>
          <div className="mt-auto"><Notice /></div>
          <button type="button" aria-label="警告" className="mb-2 mr-2.5 mt-0.5"><Warning size={16} /></button>
        </div>
      </main>
      <Timeline />
    </div>
  );
}
